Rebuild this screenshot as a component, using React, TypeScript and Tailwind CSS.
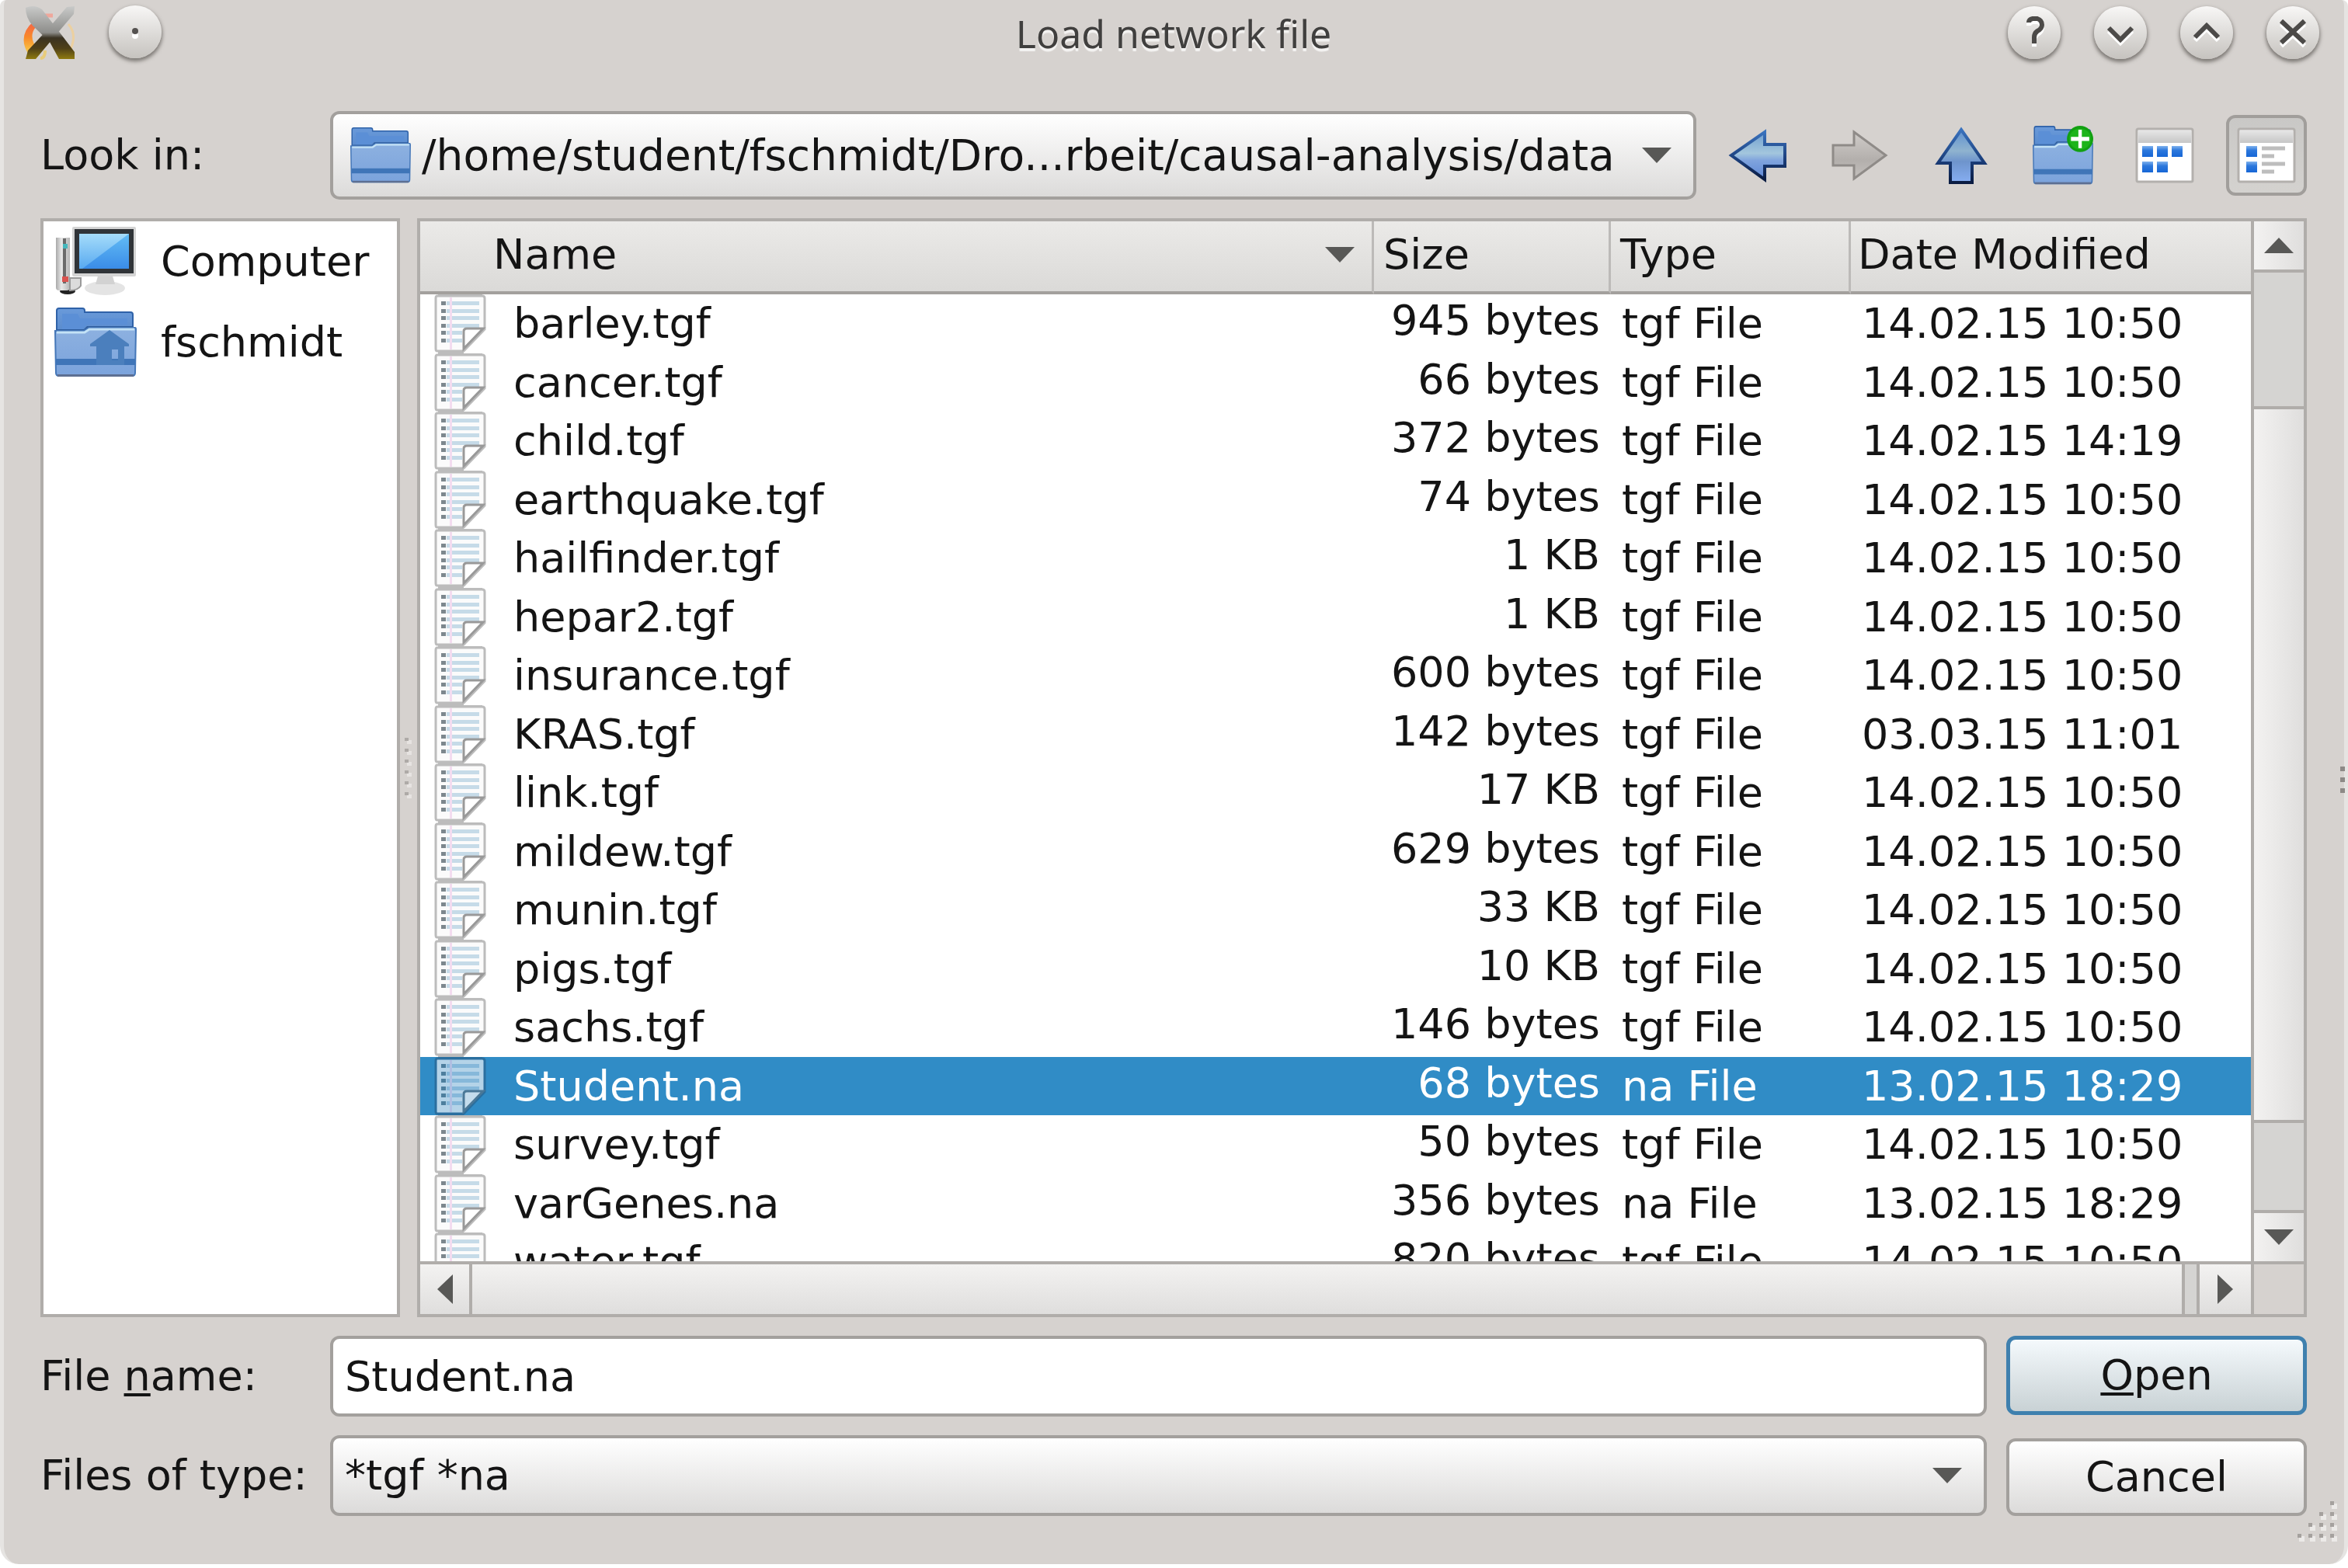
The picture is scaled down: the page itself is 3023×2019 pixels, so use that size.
import React from "react";

const rows: [string, string, string, string][] = [
  ["barley.tgf", "945 bytes", "tgf File", "14.02.15 10:50"],
  ["cancer.tgf", "66 bytes", "tgf File", "14.02.15 10:50"],
  ["child.tgf", "372 bytes", "tgf File", "14.02.15 14:19"],
  ["earthquake.tgf", "74 bytes", "tgf File", "14.02.15 10:50"],
  ["hailfinder.tgf", "1 KB", "tgf File", "14.02.15 10:50"],
  ["hepar2.tgf", "1 KB", "tgf File", "14.02.15 10:50"],
  ["insurance.tgf", "600 bytes", "tgf File", "14.02.15 10:50"],
  ["KRAS.tgf", "142 bytes", "tgf File", "03.03.15 11:01"],
  ["link.tgf", "17 KB", "tgf File", "14.02.15 10:50"],
  ["mildew.tgf", "629 bytes", "tgf File", "14.02.15 10:50"],
  ["munin.tgf", "33 KB", "tgf File", "14.02.15 10:50"],
  ["pigs.tgf", "10 KB", "tgf File", "14.02.15 10:50"],
  ["sachs.tgf", "146 bytes", "tgf File", "14.02.15 10:50"],
  ["Student.na", "68 bytes", "na File", "13.02.15 18:29"],
  ["survey.tgf", "50 bytes", "tgf File", "14.02.15 10:50"],
  ["varGenes.na", "356 bytes", "na File", "13.02.15 18:29"],
  ["water.tgf", "820 bytes", "tgf File", "14.02.15 10:50"],
];

function Triangle({ dir }: { dir: "up" | "down" | "left" | "right" }) {
  const d = {
    up: "M0 20L19 0L38 20Z",
    down: "M0 0H38L19 20Z",
    left: "M20 0V38L0 19Z",
    right: "M0 0V38L20 19Z",
  }[dir];
  const tall = dir === "left" || dir === "right";
  return (
    <svg width={tall ? 20 : 38} height={tall ? 38 : 20} viewBox={tall ? "0 0 20 38" : "0 0 38 20"} className="shrink-0" aria-hidden>
      <path d={d} fill="#585856" />
    </svg>
  );
}

function Gradients() {
  return (
    <svg width="0" height="0" className="absolute" aria-hidden>
      <defs>
        <linearGradient id="folderBack" x1="0" y1="0" x2="0" y2="1">
          <stop offset="0" stopColor="#6a9ada" />
          <stop offset="1" stopColor="#3b6fb4" />
        </linearGradient>
        <linearGradient id="folderFront" x1="0" y1="0" x2="0" y2="1">
          <stop offset="0" stopColor="#8db1e0" />
          <stop offset="1" stopColor="#7ba3dc" />
        </linearGradient>
        <linearGradient id="screen" x1="0" y1="0" x2="0" y2="1">
          <stop offset="0" stopColor="#63bdf5" />
          <stop offset="1" stopColor="#3a8ce8" />
        </linearGradient>
        <linearGradient id="screenGloss" x1="0" y1="0" x2="0" y2="1">
          <stop offset="0" stopColor="#a5dcfa" />
          <stop offset="1" stopColor="#58a9f0" />
        </linearGradient>
        <linearGradient id="tower" x1="0" y1="0" x2="1" y2="0">
          <stop offset="0" stopColor="#a9a9a9" />
          <stop offset="0.4" stopColor="#e8e8e8" />
          <stop offset="1" stopColor="#b5b5b5" />
        </linearGradient>
        <linearGradient id="blueArrow" x1="0" y1="0" x2="0" y2="1">
          <stop offset="0" stopColor="#6f9fd0" />
          <stop offset="0.45" stopColor="#a3c6dd" />
          <stop offset="0.6" stopColor="#7fa3dd" />
          <stop offset="1" stopColor="#5d87d6" />
        </linearGradient>
        <linearGradient id="upArrow" x1="0" y1="0" x2="0" y2="1">
          <stop offset="0" stopColor="#5d90d0" />
          <stop offset="0.4" stopColor="#8fb3cf" />
          <stop offset="0.6" stopColor="#6e94cc" />
          <stop offset="1" stopColor="#86aef2" />
        </linearGradient>
        <linearGradient id="arrowEdge" x1="0" y1="0" x2="0" y2="1">
          <stop offset="0" stopColor="#3a72bd" />
          <stop offset="0.6" stopColor="#1a3c78" />
          <stop offset="1" stopColor="#0a1c42" />
        </linearGradient>
        <linearGradient id="grayArrow" x1="0" y1="0" x2="0" y2="1">
          <stop offset="0" stopColor="#d0ccc9" />
          <stop offset="0.6" stopColor="#b3afac" />
          <stop offset="1" stopColor="#c4c0bd" />
        </linearGradient>
        <linearGradient id="paneBar" x1="0" y1="0" x2="0" y2="1">
          <stop offset="0" stopColor="#e6e6e6" />
          <stop offset="1" stopColor="#c6c6c6" />
        </linearGradient>
        <linearGradient id="tile" x1="0" y1="0" x2="0" y2="1">
          <stop offset="0" stopColor="#7fb2ee" />
          <stop offset="0.4" stopColor="#2d78dc" />
          <stop offset="1" stopColor="#1666d6" />
        </linearGradient>
        <linearGradient id="blade" x1="0" y1="0" x2="0" y2="1">
          <stop offset="0" stopColor="#c9cac9" />
          <stop offset="0.5" stopColor="#8d8d8a" />
          <stop offset="0.6" stopColor="#3a3222" />
          <stop offset="0.8" stopColor="#4f4018" />
          <stop offset="1" stopColor="#8f7a10" />
        </linearGradient>
        <linearGradient id="flame" x1="0" y1="0" x2="0" y2="1">
          <stop offset="0" stopColor="#f3604a" />
          <stop offset="0.5" stopColor="#f98a2a" />
          <stop offset="1" stopColor="#f8cf4a" />
        </linearGradient>
      </defs>
    </svg>
  );
}

function Folder({ className, badge }: { className: string; badge?: "home" | "plus" }) {
  return (
    <svg viewBox="0 0 106 90" preserveAspectRatio="none" className={className} aria-hidden>
      <path d="M3 86V4Q3 1 6 1H36Q39 1 39 4V6H98Q101 6 101 9V40H3Z" fill="url(#folderBack)" stroke="#2f62a8" strokeWidth="2" />
      <path d="M10 8H30L33 14H94V22H42L36 28H10Z" fill="#5b8fd6" />
      <path d="M3 28H38L42 24H101V32H3Z" fill="#2e5c9c" />
      <path d="M1 30H38L44 26H104Q105 26 105 28L104 84Q104 88 100 88H6Q2 88 2 84Z" fill="url(#folderFront)" stroke="#4577b8" strokeWidth="2" />
      <path d="M3 32H39L45 28H103" fill="none" stroke="#c3e2f6" strokeWidth="3" />
      <rect x="2" y="66" width="102" height="8" fill="#3f75b8" />
      <rect x="4" y="86" width="98" height="3" fill="#5d6f92" />
      {badge === "home" && (
        <path d="M71 29L96 47V50H90V74H82V54H74V68H82V74H54V50H46V47Z" fill="#4b7fbd" fillRule="evenodd" />
      )}
      {badge === "plus" && (
        <g>
          <ellipse cx="83" cy="20" rx="23" ry="20" fill="#12a012" />
          <ellipse cx="83" cy="20" rx="19" ry="16" fill="#1db41a" />
          <path d="M83 6V34M67 20H99" stroke="#fff" strokeWidth="6" />
        </g>
      )}
    </svg>
  );
}

function ComputerIcon() {
  return (
    <svg width="106" height="90" viewBox="0 0 106 90" className="shrink-0" aria-hidden>
      <ellipse cx="17" cy="83" rx="10" ry="4" fill="#222" />
      <path d="M2 14H20V78Q20 82 16 82H6Q2 82 2 78Z" fill="url(#tower)" />
      <rect x="11" y="15" width="4" height="58" fill="#6b6b6b" />
      <rect x="11" y="22" width="6" height="6" fill="#46b8bd" />
      <rect x="10" y="64" width="8" height="7" fill="#d95350" />
      <path d="M20 66H34V76Q30 82 20 82Z" fill="#dcdcdc" stroke="#9a9a9a" strokeWidth="2" />
      <ellipse cx="65" cy="79" rx="26" ry="9" fill="#e4e4e4" />
      <path d="M57 60H74L78 74H53Z" fill="#d2d2d2" />
      <rect x="23" y="0" width="82" height="64" rx="2" fill="#d4d4d4" />
      <rect x="26" y="3" width="76" height="57" fill="#303438" />
      <rect x="32" y="9" width="64" height="45" fill="url(#screen)" />
      <path d="M32 9H96L36 54H32Z" fill="url(#screenGloss)" />
    </svg>
  );
}

function FileIcon({ selected }: { selected: boolean }) {
  const paper = selected ? "#b4d3e8" : "#fbfbfb";
  const edge = selected ? "#2a6f9f" : "#bcbcbc";
  const line = selected ? "#86b8da" : "#c6dbe8";
  return (
    <svg width="68" height="76" viewBox="0 0 68 76" className="absolute top-0 left-[18px]" aria-hidden>
      <path d="M4 2H62Q65 2 65 5V45L38 73H4Q2 73 2 70V5Q2 2 4 2Z" fill={paper} stroke={edge} strokeWidth="3" />
      <path d="M5 1H62M5 75H38" stroke={edge} strokeWidth="3" />
      {[9, 19, 28, 38, 47, 57].map((y) => (
        <g key={y}>
          <rect x="16" y={y} width={y > 40 ? 20 : 42} height="5" fill={line} />
          <rect x="9" y={y} width="6" height="5" fill={selected ? "#4d7f9e" : "#7d888e"} />
        </g>
      ))}
      <rect x="20" y="4" width="3" height="67" fill={selected ? "#b0bfe2" : "#f3dcf0"} />
      <path d="M38 70V48Q38 44 42 44H63Z" fill={selected ? "#c4dcec" : "#fff"} stroke={selected ? "#4a7897" : "#999"} strokeWidth="3" />
    </svg>
  );
}

function RoundButton({ label, children }: { label: string; children: React.ReactNode }) {
  return (
    <button
      aria-label={label}
      className="flex size-[68px] items-center justify-center rounded-full bg-linear-to-b from-[#f8f7f6] to-[#c6c3bf] shadow-[0_3px_5px_1px_#7c7874]"
    >
      <svg width="44" height="44" viewBox="0 0 44 44" fill="none" strokeWidth="6" aria-hidden>
        {children}
      </svg>
    </button>
  );
}

function Glyph({ d }: { d: string }) {
  return (
    <>
      <path d={d} stroke="#fff" transform="translate(0 4)" />
      <path d={d} stroke="#4c4a48" />
    </>
  );
}

function ToolButton({ label, active, children }: { label: string; active?: boolean; children: React.ReactNode }) {
  return (
    <button
      aria-label={label}
      className={
        active
          ? "flex h-[104px] w-[104px] items-center justify-center rounded-xl border-4 border-[#a19e9b] bg-linear-to-b from-[#c9c8c6] to-[#d4d2cf]"
          : "flex h-[104px] w-[104px] items-center justify-center"
      }
    >
      {children}
    </button>
  );
}

function ViewIcon({ detail }: { detail?: boolean }) {
  const tiles = detail
    ? [[12, 24], [12, 44]]
    : [[9, 24], [28, 24], [47, 24], [9, 44], [28, 44]];
  return (
    <svg width="76" height="72" viewBox="0 0 76 72" className="shrink-0" aria-hidden>
      <rect x="2" y="2" width="72" height="68" rx="2" fill="#fff" stroke="#b3b0ad" strokeWidth="3" />
      <rect x="4" y="4" width="68" height="16" fill="url(#paneBar)" />
      {tiles.map(([x, y]) => (
        <rect key={`${x}-${y}`} x={x} y={y} width="14" height="14" fill="url(#tile)" />
      ))}
      {detail && <path d="M32 27H62M32 37H48M32 47H62M32 57H48" stroke="#bdbdbd" strokeWidth="5" />}
    </svg>
  );
}

const gripDots = [0, 1, 2, 3, 4, 5];

function Grip() {
  return (
    <svg width="14" height="78" viewBox="0 0 14 78" aria-hidden>
      {gripDots.map((i) => (
        <g key={i}>
          <rect x="5" y={i * 14 + 3} width="6" height="5" fill="#e6e3e1" />
          <rect x="2" y={i * 14} width="5" height="4" fill="#aeaaa7" />
        </g>
      ))}
    </svg>
  );
}

export default function App() {
  return (
    <div className="bg-white pb-[5px] font-['DejaVu_Sans',sans-serif] text-[54px] leading-[64px] text-[#141414]">
      <Gradients />
      <div className="relative flex h-[2014px] flex-col rounded-t-lg rounded-b-3xl border-x-[5px] border-[#e6e4e2] bg-[#d6d2cf] pr-[48px] pl-[47px]">
        <header className="grid h-[143px] grid-cols-[1fr_auto_1fr] items-start">
          <div className="-ml-6 flex gap-[40px] pt-[7px]">
            <svg width="72" height="72" viewBox="0 0 72 72" aria-hidden>
              <path d="M16 20Q-6 38 8 62L20 56Q8 40 18 28Z" fill="url(#flame)" />
              <path d="M60 24Q72 38 62 58" fill="none" stroke="#ecd0a0" strokeWidth="3" />
              <path d="M30 13H40" stroke="#efa79b" strokeWidth="5" />
              <path d="M24 68Q30 68 30 58" fill="none" stroke="#e8cc7a" strokeWidth="4" />
              <path d="M58 2L68 1L67 11L44 38L18 69H5L8 58L34 30Z" fill="url(#blade)" />
              <path d="M5 3Q16 -2 26 5L46 31L68 60V69H48L36 47L14 26Q5 16 5 3Z" fill="url(#blade)" />
            </svg>
            <RoundButton label="On all desktops">
              <circle cx="22" cy="27" r="4" fill="#fff" />
              <circle cx="22" cy="21" r="4" fill="#555250" />
            </RoundButton>
          </div>
          <h1 className="pt-[11px] font-['Noto_Sans',sans-serif] text-[50px] text-[#403f3e] [text-shadow:0_4px_1px_#f4f3f2]">
            Load network file
          </h1>
          <div className="-mr-4 flex justify-end gap-[43px] pt-[8px]">
            <RoundButton label="Help">
              <Glyph d="M15 9Q15 5 20 4H26Q32 6 32 12Q32 17 26 20Q22 23 22 28V36" />
            </RoundButton>
            <RoundButton label="Minimize">
              <Glyph d="M7 16L22 31L37 16" />
            </RoundButton>
            <RoundButton label="Maximize">
              <Glyph d="M7 28L22 13L37 28" />
            </RoundButton>
            <RoundButton label="Close">
              <Glyph d="M7 7L37 35M37 7L7 35" />
            </RoundButton>
          </div>
        </header>

        <div className="flex items-center gap-[27px]">
          <div className="flex min-w-0 flex-1 items-center">
            <span id="lookin" className="w-[373px] shrink-0">Look in:</span>
            <button
              aria-labelledby="lookin"
              className="flex h-[114px] min-w-0 flex-1 items-center rounded-xl border-4 border-[#a3a09d] bg-linear-to-b from-white to-[#dcdbda] pr-[28px] pl-[22px] text-[55px]"
            >
              <Folder className="mr-[14px] h-[72px] w-[78px] shrink-0" />
              <span className="min-w-0 flex-1 overflow-hidden text-left whitespace-nowrap">
                /home/student/fschmidt/Dro...rbeit/causal-analysis/data
              </span>
              <Triangle dir="down" />
            </button>
          </div>
          <ToolButton label="Back">
            <svg width="76" height="70" viewBox="0 0 76 70" aria-hidden>
              <path d="M47 5V21H73V49H47V66L4 35Z" fill="url(#blueArrow)" stroke="url(#arrowEdge)" strokeWidth="4" />
            </svg>
          </ToolButton>
          <ToolButton label="Forward">
            <svg width="76" height="70" viewBox="0 0 76 70" aria-hidden>
              <path d="M31 5V22H4V48H31V65L72 35Z" fill="url(#grayArrow)" stroke="#8f8b88" strokeWidth="3" />
            </svg>
          </ToolButton>
          <ToolButton label="Parent directory">
            <svg width="68" height="76" viewBox="0 0 68 76" aria-hidden>
              <path d="M34 5L64 48H48V73H20V48H4Z" fill="url(#upArrow)" stroke="url(#arrowEdge)" strokeWidth="4" />
            </svg>
          </ToolButton>
          <ToolButton label="Create new folder">
            <Folder className="h-[76px] w-[78px]" badge="plus" />
          </ToolButton>
          <ToolButton label="List view">
            <ViewIcon />
          </ToolButton>
          <ToolButton label="Detail view" active>
            <ViewIcon detail />
          </ToolButton>
        </div>

        <div className="mt-[24px] flex h-[1415px]">
          <ul className="w-[463px] shrink-0 border-4 border-[#b0adaa] bg-white pl-[14px]">
            <li className="flex h-[104px] items-center gap-[31px]">
              <ComputerIcon />
              Computer
            </li>
            <li className="flex h-[104px] items-center gap-[31px]">
              <Folder className="h-[90px] w-[106px] shrink-0" badge="home" />
              fschmidt
            </li>
          </ul>
          <div className="flex w-[22px] shrink-0 items-center justify-center">
            <Grip />
          </div>

          <div className="grid min-w-0 flex-1 grid-cols-[minmax(0,1fr)_68px] grid-rows-[minmax(0,1fr)_68px] border-4 border-[#b0adaa]">
            <div className="overflow-hidden bg-white">
              <table className="w-full table-fixed border-separate border-spacing-0">
                <colgroup>
                  <col />
                  <col className="w-[305px]" />
                  <col className="w-[309px]" />
                  <col className="w-[515px]" />
                </colgroup>
                <thead>
                  <tr className="h-[94px] bg-linear-to-b from-[#ebeae8] to-[#dad9d7] text-left">
                    <th className="border-r-3 border-b-4 border-r-[#bcbab8] border-b-[#a3a09d] p-0 pb-1 font-normal">
                      <div className="flex items-center justify-between pr-[22px] pl-[94px]">
                        Name
                        <Triangle dir="down" />
                      </div>
                    </th>
                    <th className="border-r-3 border-b-4 border-r-[#bcbab8] border-b-[#a3a09d] pt-0 pr-0 pb-1 pl-[12px] font-normal">Size</th>
                    <th className="border-r-3 border-b-4 border-r-[#bcbab8] border-b-[#a3a09d] pt-0 pr-0 pb-1 pl-[12px] font-normal">Type</th>
                    <th className="border-b-4 border-[#a3a09d] pt-0 pr-0 pb-1 pl-[9px] font-normal">Date Modified</th>
                  </tr>
                </thead>
                <tbody>
                  {rows.map(([name, size, type, date]) => {
                    const selected = name === "Student.na";
                    return (
                      <tr
                        key={name}
                        className={selected ? "bg-[#308cc6] text-white odd:h-[76px] even:h-[75px]" : "odd:h-[76px] even:h-[75px]"}
                      >
                        <td className="relative py-0 pr-0 pl-[120px]">
                          <FileIcon selected={selected} />
                          {name}
                        </td>
                        <td className="pt-0 pr-[14px] pb-2 pl-0 text-right">{size}</td>
                        <td className="py-0 pr-0 pl-[14px]">{type}</td>
                        <td className="py-0 pr-0 pl-[14px]">{date}</td>
                      </tr>
                    );
                  })}
                </tbody>
              </table>
            </div>

            <div className="flex flex-col border-l-4 border-[#b0adaa] bg-[#d5d4d2]">
              <button aria-label="Scroll up" className="flex h-[66px] items-center justify-center border-b-4 border-[#b0adaa] bg-linear-to-r from-[#f3f2f1] to-[#dfdedd]">
                <Triangle dir="up" />
              </button>
              <div className="h-[172px]" />
              <div className="flex-1 border-y-4 border-[#b0adaa] bg-linear-to-r from-[#f3f2f1] to-[#dfdedd]" />
              <div className="h-[112px]" />
              <button aria-label="Scroll down" className="flex h-[66px] items-center justify-center border-t-4 border-[#b0adaa] bg-linear-to-r from-[#f3f2f1] to-[#dfdedd]">
                <Triangle dir="down" />
              </button>
            </div>

            <div className="flex border-t-4 border-[#b0adaa] bg-[#d5d4d2]">
              <button aria-label="Scroll left" className="flex w-[63px] items-center justify-center bg-linear-to-b from-[#f3f2f1] to-[#dfdedd]">
                <Triangle dir="left" />
              </button>
              <div className="flex-1 border-x-4 border-[#b0adaa] bg-linear-to-b from-[#f3f2f1] to-[#dfdedd]" />
              <div className="w-[15px]" />
              <button aria-label="Scroll right" className="flex w-[70px] items-center justify-center border-l-4 border-[#b0adaa] bg-linear-to-b from-[#f3f2f1] to-[#dfdedd]">
                <Triangle dir="right" />
              </button>
            </div>
            <div className="border-t-4 border-l-4 border-[#b0adaa]" />
          </div>
        </div>

        <div className="mt-[24px] grid grid-cols-[373px_minmax(0,1fr)_387px] gap-y-[24px]">
          <label htmlFor="fname" className="flex h-[104px] items-center whitespace-pre">
            File <span className="underline decoration-4 underline-offset-4">n</span>ame:
          </label>
          <input
            id="fname"
            defaultValue="Student.na"
            className="mr-[25px] h-[104px] rounded-xl border-4 border-[#a3a09d] bg-white pl-[15px]"
          />
          <button className="h-[102px] rounded-xl border-5 border-[#3f80ae] bg-linear-to-b from-[#f4f9fc] to-[#c9d2d5]">
            <span className="underline decoration-4 underline-offset-4">O</span>pen
          </button>
          <label htmlFor="ftype" className="flex h-[104px] items-center">
            Files of type:
          </label>
          <div className="relative mr-[25px] flex">
            <select
              id="ftype"
              className="h-[104px] w-full appearance-none rounded-xl border-4 border-[#a3a09d] bg-linear-to-b from-white to-[#dcdbda] pl-[15px]"
            >
              <option>*tgf *na</option>
            </select>
            <div className="pointer-events-none absolute inset-y-0 right-[32px] flex items-center">
              <Triangle dir="down" />
            </div>
          </div>
          <button className="mt-1 h-[100px] rounded-xl border-4 border-[#a3a09d] bg-linear-to-b from-white to-[#dcdbda]">
            Cancel
          </button>
        </div>

        <svg width="12" height="36" viewBox="0 0 12 36" className="absolute top-[986px] -right-[5px]" aria-hidden>
          {[0, 14, 28].map((y) => (
            <rect key={y} x="2" y={y + 1} width="6" height="6" fill="#8d8986" />
          ))}
        </svg>
        <svg width="56" height="56" viewBox="0 0 56 56" className="absolute right-[6px] bottom-[26px]" aria-hidden>
          {[0, 1, 2, 3].flatMap((r) =>
            [0, 1, 2, 3].filter((c) => c >= 3 - r).map((c) => (
              <g key={`${r}-${c}`}>
                <rect x={c * 14 + 4} y={r * 14 + 4} width="7" height="7" fill="#eceae8" />
                <rect x={c * 14 + 2} y={r * 14 + 1} width="5" height="5" fill="#a5a19e" />
              </g>
            )),
          )}
        </svg>
      </div>
    </div>
  );
}
